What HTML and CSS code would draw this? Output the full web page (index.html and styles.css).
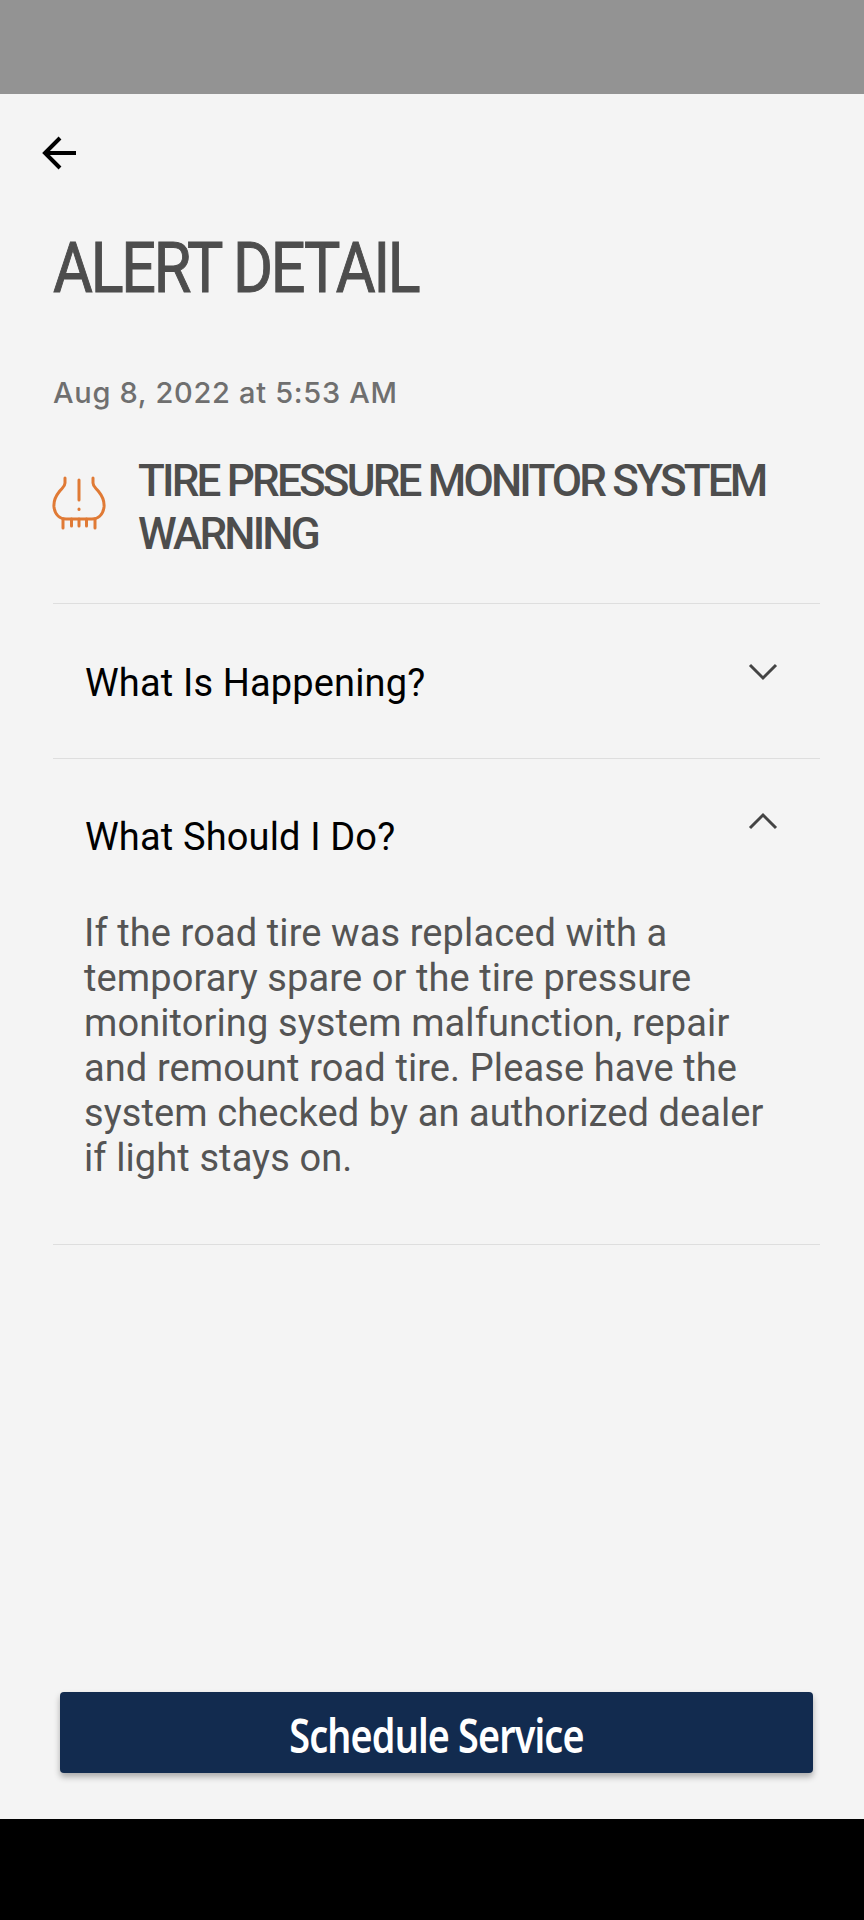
FILE: index.html
```html
<!DOCTYPE html>
<html lang="en">
  <head>
    <meta charset="UTF-8">
    <meta name="viewport" content="width=device-width, initial-scale=1.0">
    <title>Alert Detail</title>
    <link rel="stylesheet" href="styles.css">
  </head>
  <body>
    <div class="status-bar"></div>
    <main class="screen">
      <div class="content">
        <a class="back" href="#" aria-label="Back">
          <svg width="34" height="34" viewBox="0 0 34 34" fill="none" stroke="#000" stroke-width="4">
            <path d="M34 17H3"/>
            <path d="M18 2L3 17l15 15"/>
          </svg>
        </a>
        <h1 class="page-title"><span>ALERT DETAIL</span></h1>
        <p class="alert-date">Aug 8, 2022 at 5:53 AM</p>
        <div class="alert-head">
          <svg class="tire-icon" width="54" height="54" viewBox="0 0 54 54" fill="none" stroke="#e07a35" stroke-width="3" stroke-linecap="round">
            <path d="M13 2v5c0 4-3 5-6 9C3 21 1.500 26 2 31c1 8 6 12 12 12h26c6 0 11-4 12-12 .5-5-1-10-5-15-3-4-6-5-6-9V2"/>
            <path d="M27 4v20"/>
            <path d="M27 33v.5"/>
            <path d="M11 43v9M19.500 43v7M27 43v7M34.500 43v7M43 43v9"/>
          </svg>
          <h2 class="alert-title">TIRE PRESSURE MONITOR SYSTEM WARNING</h2>
        </div>
        <section class="row">
          <div class="row-head">
            <h3>What Is Happening?</h3>
            <svg class="chevron" width="30" height="18" viewBox="0 0 30 18" fill="none" stroke="#444" stroke-width="3">
              <path d="M2 2l13 13L28 2"/>
            </svg>
          </div>
        </section>
        <section class="row open">
          <div class="row-head">
            <h3>What Should I Do?</h3>
            <svg class="chevron" width="30" height="18" viewBox="0 0 30 18" fill="none" stroke="#444" stroke-width="3">
              <path d="M2 16L15 3l13 13"/>
            </svg>
          </div>
          <p class="row-body">If the road tire was replaced with a temporary spare or the tire pressure monitoring system malfunction, repair and remount road tire. Please have the system checked by an authorized dealer if light stays on.</p>
        </section>
      </div>
      <div class="actions">
        <button class="btn-primary" type="button"><span>Schedule Service</span></button>
      </div>
    </main>
    <div class="nav-bar"></div>
  </body>
</html>
```

FILE: styles.css
```css
* {
    box-sizing: border-box;
}
html, body {
    height: 100%;
}
body {
    margin: 0;
    display: flex;
    flex-direction: column;
    font-family: Roboto, "Liberation Sans", sans-serif;
    background-color: #f4f4f4;
}
.status-bar {
    height: 94px;
    background-color: #939393;
}
.nav-bar {
    height: 101px;
    background-color: #000;
}
.screen {
    flex: 1;
    display: flex;
    flex-direction: column;
    justify-content: space-between;
}
.content {
    padding: 42px 44px 0 53px;
}
.back {
    display: block;
    width: 34px;
    height: 34px;
    margin-left: -11px;
}
.back svg {
    display: block;
}
.page-title {
    margin: 62px 0 0;
    height: 72px;
    font-size: 70px;
    line-height: 72px;
    font-weight: 400;
    color: #4d4d4d;
    white-space: nowrap;
    letter-spacing: -2.5px;
    -webkit-text-stroke: 1px #4d4d4d;
}
.page-title span {
    display: inline-block;
    transform: scaleX(0.872);
    transform-origin: left center;
}
.alert-date {
    margin: 71px 0 0;
    font-family: Inter, sans-serif;
    font-size: 29px;
    line-height: 36px;
    font-weight: 500;
    letter-spacing: 0.7px;
    color: #6f6f6f;
}
.alert-head {
    display: flex;
    align-items: center;
    gap: 32px;
    margin-top: 41px;
    height: 112px;
}
.tire-icon {
    flex: none;
    margin: 0 0 10px -1px;
}
.alert-title {
    margin: 0;
    font-size: 44px;
    line-height: 53px;
    font-weight: 500;
    color: #4d4d4d;
    letter-spacing: -2.8px;
}
.row {
    border-top: 1px solid #dedede;
}
.alert-head + .row {
    margin-top: 39px;
}
.row:last-child {
    border-bottom: 1px solid #dedede;
}
.row-head {
    display: flex;
    justify-content: space-between;
    height: 154px;
    padding: 57px 42px 0 32px;
}
.row.open .row-head {
    height: 152px;
    padding-top: 56px;
}
.row-head h3 {
    margin: 0;
    font-size: 38px;
    line-height: 44px;
    font-weight: 400;
    letter-spacing: 0.15px;
    color: #000;
}
.chevron {
    margin-top: 2px;
}
.row.open .chevron {
    margin-top: -3px;
}
.row-body {
    margin: 0;
    padding: 0 48px 63px 31px;
    font-size: 38px;
    line-height: 45px;
    letter-spacing: 0.1px;
    color: #545454;
}
.actions {
    padding: 0 51px 46px 60px;
}
.btn-primary {
    display: block;
    width: 100%;
    height: 81px;
    padding-top: 6px;
    border: none;
    border-radius: 4px;
    background-color: #122b4f;
    color: #fff;
    font-family: "Noto Sans", sans-serif;
    font-size: 46px;
    font-weight: 600;
    letter-spacing: -1px;
    box-shadow: 0 4px 6px rgba(0, 0, 0, 0.3);
}
.btn-primary span {
    display: inline-block;
    transform: scaleX(0.82);
}
```
